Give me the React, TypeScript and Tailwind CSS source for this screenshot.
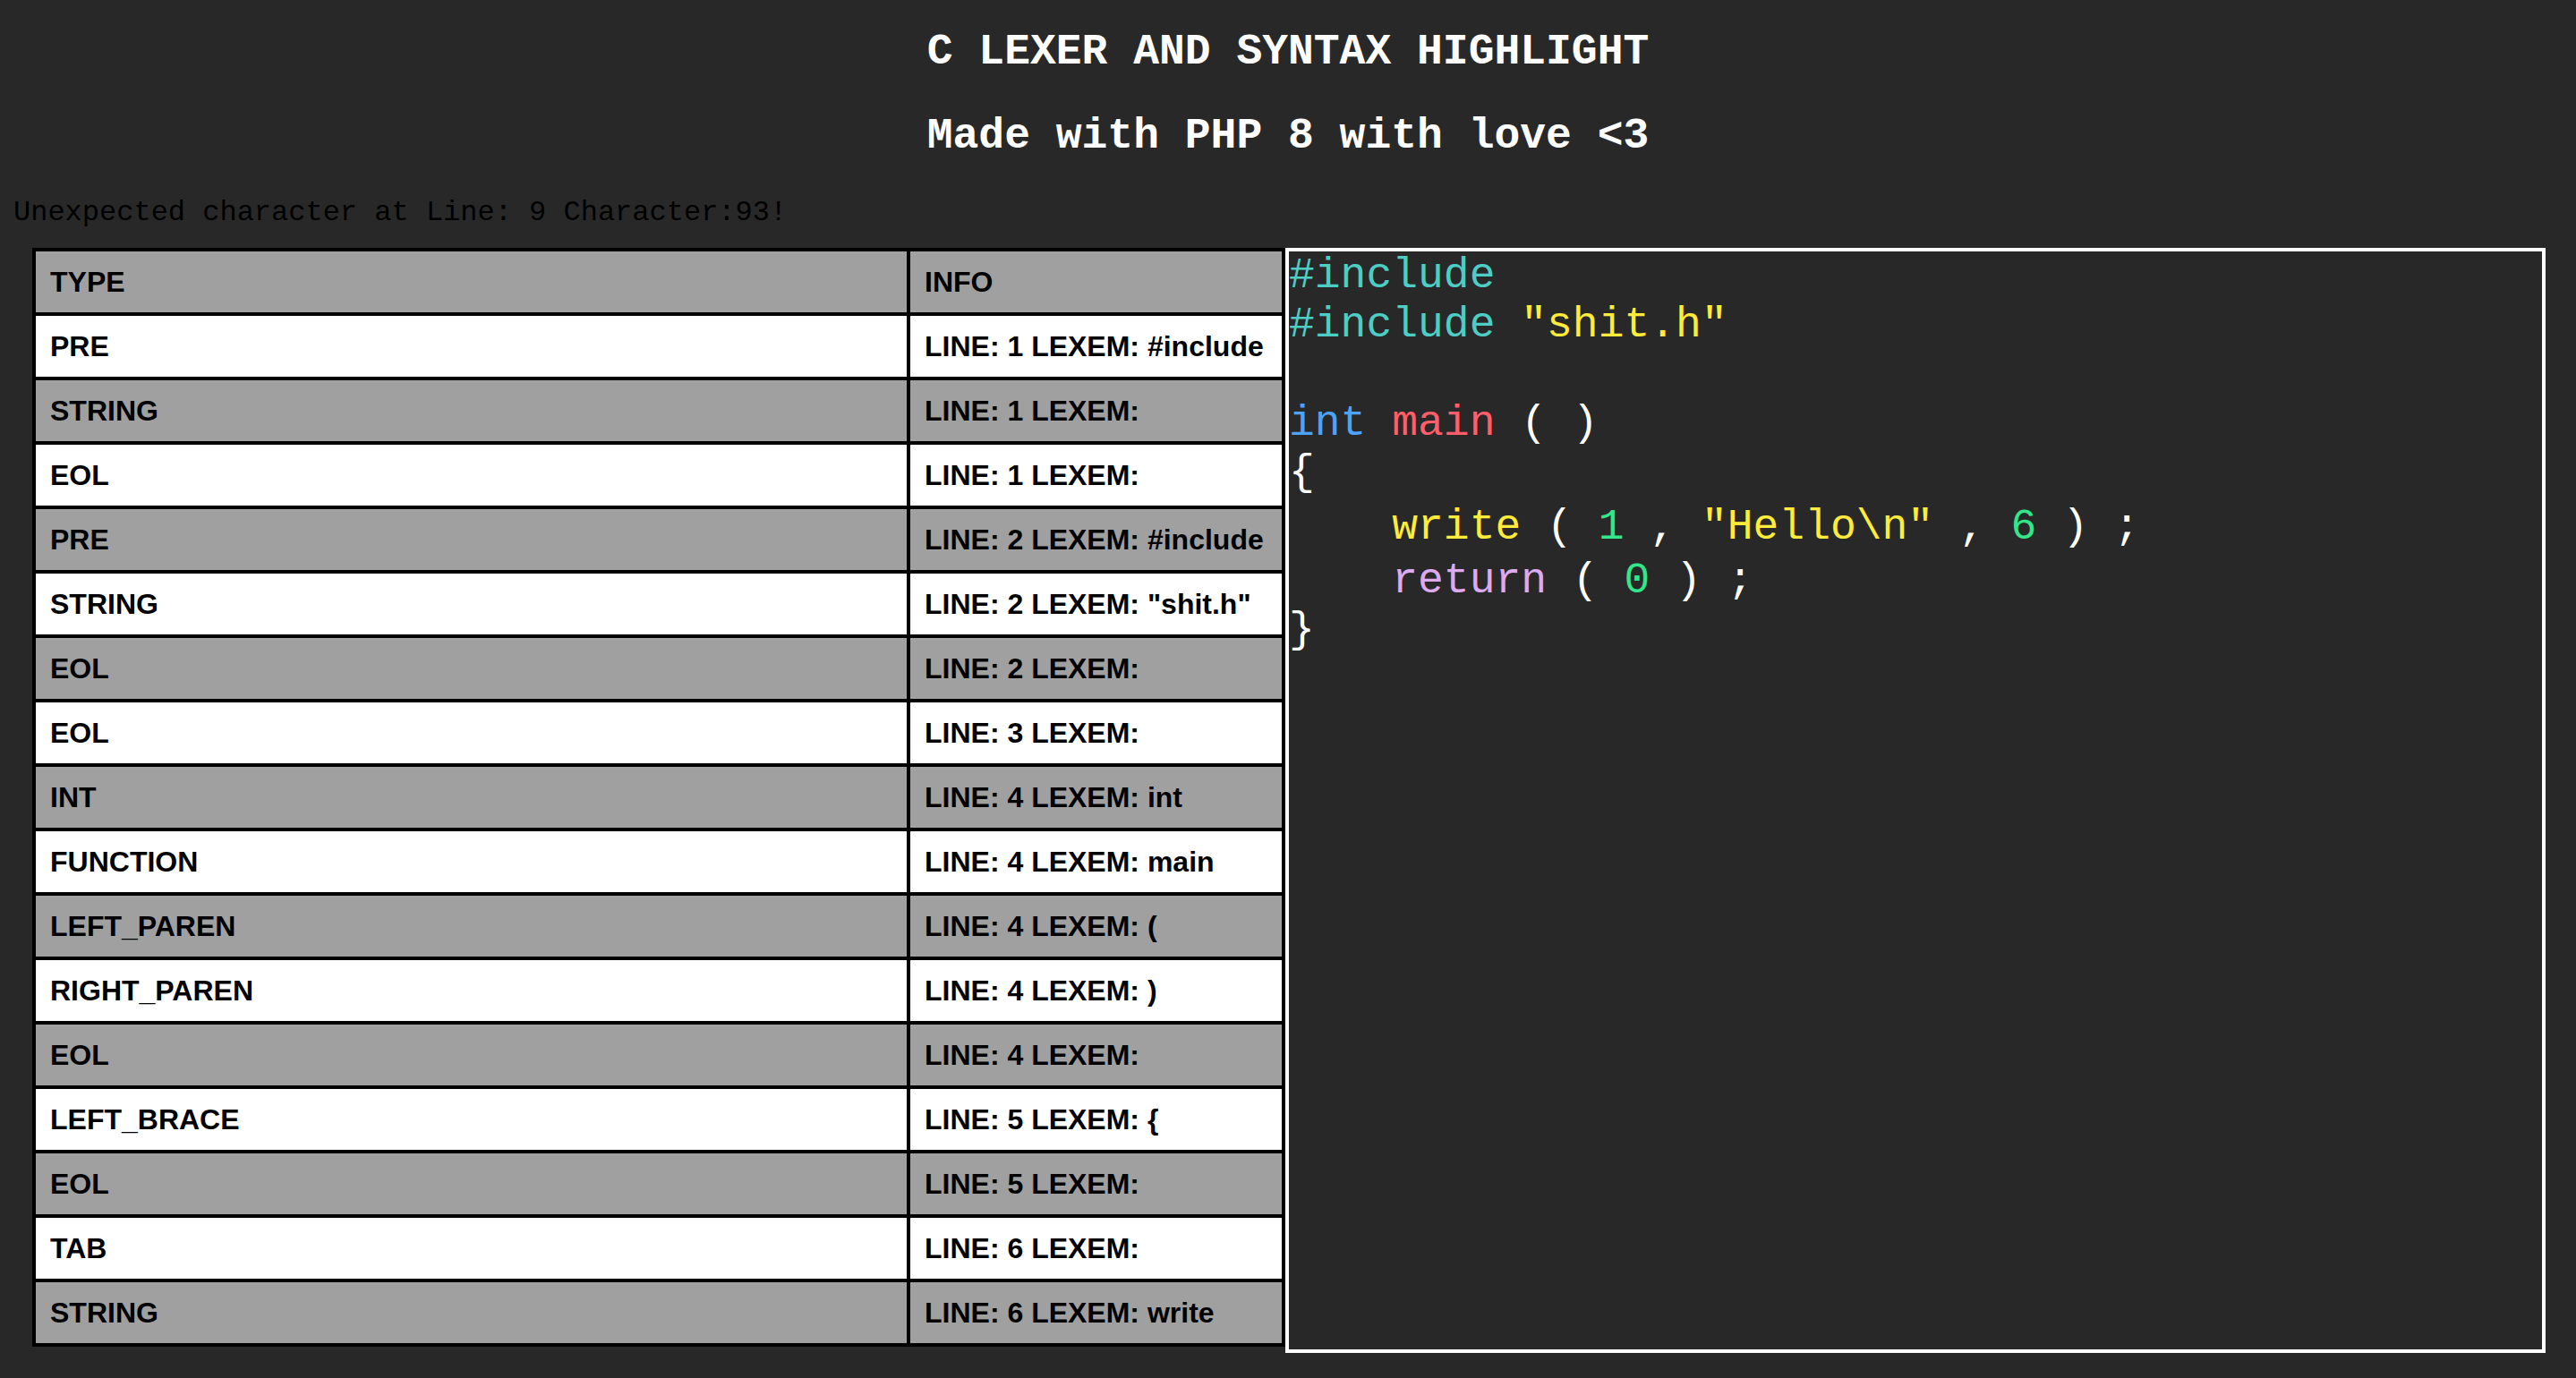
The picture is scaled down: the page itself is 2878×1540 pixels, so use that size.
import React from "react";

const rows: [string, string][] = [
  ["PRE", "LINE: 1 LEXEM: #include"],
  ["STRING", "LINE: 1 LEXEM:"],
  ["EOL", "LINE: 1 LEXEM:"],
  ["PRE", "LINE: 2 LEXEM: #include"],
  ["STRING", 'LINE: 2 LEXEM: "shit.h"'],
  ["EOL", "LINE: 2 LEXEM:"],
  ["EOL", "LINE: 3 LEXEM:"],
  ["INT", "LINE: 4 LEXEM: int"],
  ["FUNCTION", "LINE: 4 LEXEM: main"],
  ["LEFT_PAREN", "LINE: 4 LEXEM: ("],
  ["RIGHT_PAREN", "LINE: 4 LEXEM: )"],
  ["EOL", "LINE: 4 LEXEM:"],
  ["LEFT_BRACE", "LINE: 5 LEXEM: {"],
  ["EOL", "LINE: 5 LEXEM:"],
  ["TAB", "LINE: 6 LEXEM:"],
  ["STRING", "LINE: 6 LEXEM: write"],
];

function Cell({ text, gray }: { text: string; gray: boolean }) {
  return (
    <div className={`h-[68px] flex items-center px-4 font-bold text-[32px] text-black ${gray ? "bg-[#a0a0a0]" : "bg-white"}`}>
      {text}
    </div>
  );
}

function TokenTable() {
  return (
    <div className="w-[1400px] shrink-0 bg-black p-[4px] grid grid-cols-[973px_415px] gap-[4px] font-['Liberation_Sans',Arial,sans-serif]">
      <Cell text="TYPE" gray />
      <Cell text="INFO" gray />
      {rows.map(([type, info], i) => (
        <React.Fragment key={i}>
          <Cell text={type} gray={i % 2 === 1} />
          <Cell text={info} gray={i % 2 === 1} />
        </React.Fragment>
      ))}
    </div>
  );
}

function CodeView() {
  const teal = "text-[#4ecdc4]";
  const yellow = "text-[#ffeb3b]";
  return (
    <div className="w-[1408px] h-[1235px] shrink-0 border-4 border-white bg-[#282828] text-white text-[48px] whitespace-pre font-['Liberation_Mono',monospace]">
      <div className="leading-[55px]"><span className={teal}>#include</span></div>
      <div className="leading-[55px]">
        <span className={teal}>#include</span> <span className={yellow}>"shit.h"</span>
      </div>
      <div className="leading-[55px]">{" "}</div>
      <div className="leading-[55px]">
        <span className="text-[#4fa3f7]">int</span> <span className="text-[#ff5e6a]">main</span> ( )
      </div>
      <div className="leading-[55px]">{"{"}</div>
      <div className="leading-[55px] mt-[6px]">
        {"    "}<span className={yellow}>write</span> ( <span className="text-[#33e68a]">1</span> , <span className={yellow}>"Hello\n"</span> , <span className="text-[#33e68a]">6</span> ) ;
      </div>
      <div className="leading-[55px] mt-[5px]">
        {"    "}<span className="text-[#ddaaee]">return</span> ( <span className="text-[#33e68a]">0</span> ) ;
      </div>
      <div className="leading-[55px]">{"}"}</div>
    </div>
  );
}

export default function App() {
  return (
    <div className="min-h-screen bg-[#282828] pt-[31px] font-['Liberation_Mono',monospace]">
      <h1 className="text-center text-white font-bold text-[48px] leading-[54px]">C LEXER AND SYNTAX HIGHLIGHT</h1>
      <h2 className="mt-[40px] text-center text-white font-bold text-[48px] leading-[54px]">Made with PHP 8 with love &lt;3</h2>
      <p className="mt-[41px] ml-[15px] text-[32px] leading-[36px] text-black">Unexpected character at Line: 9 Character:93!</p>
      <div className="mt-[21px] ml-[36px] flex items-start">
        <TokenTable />
        <CodeView />
      </div>
    </div>
  );
}
